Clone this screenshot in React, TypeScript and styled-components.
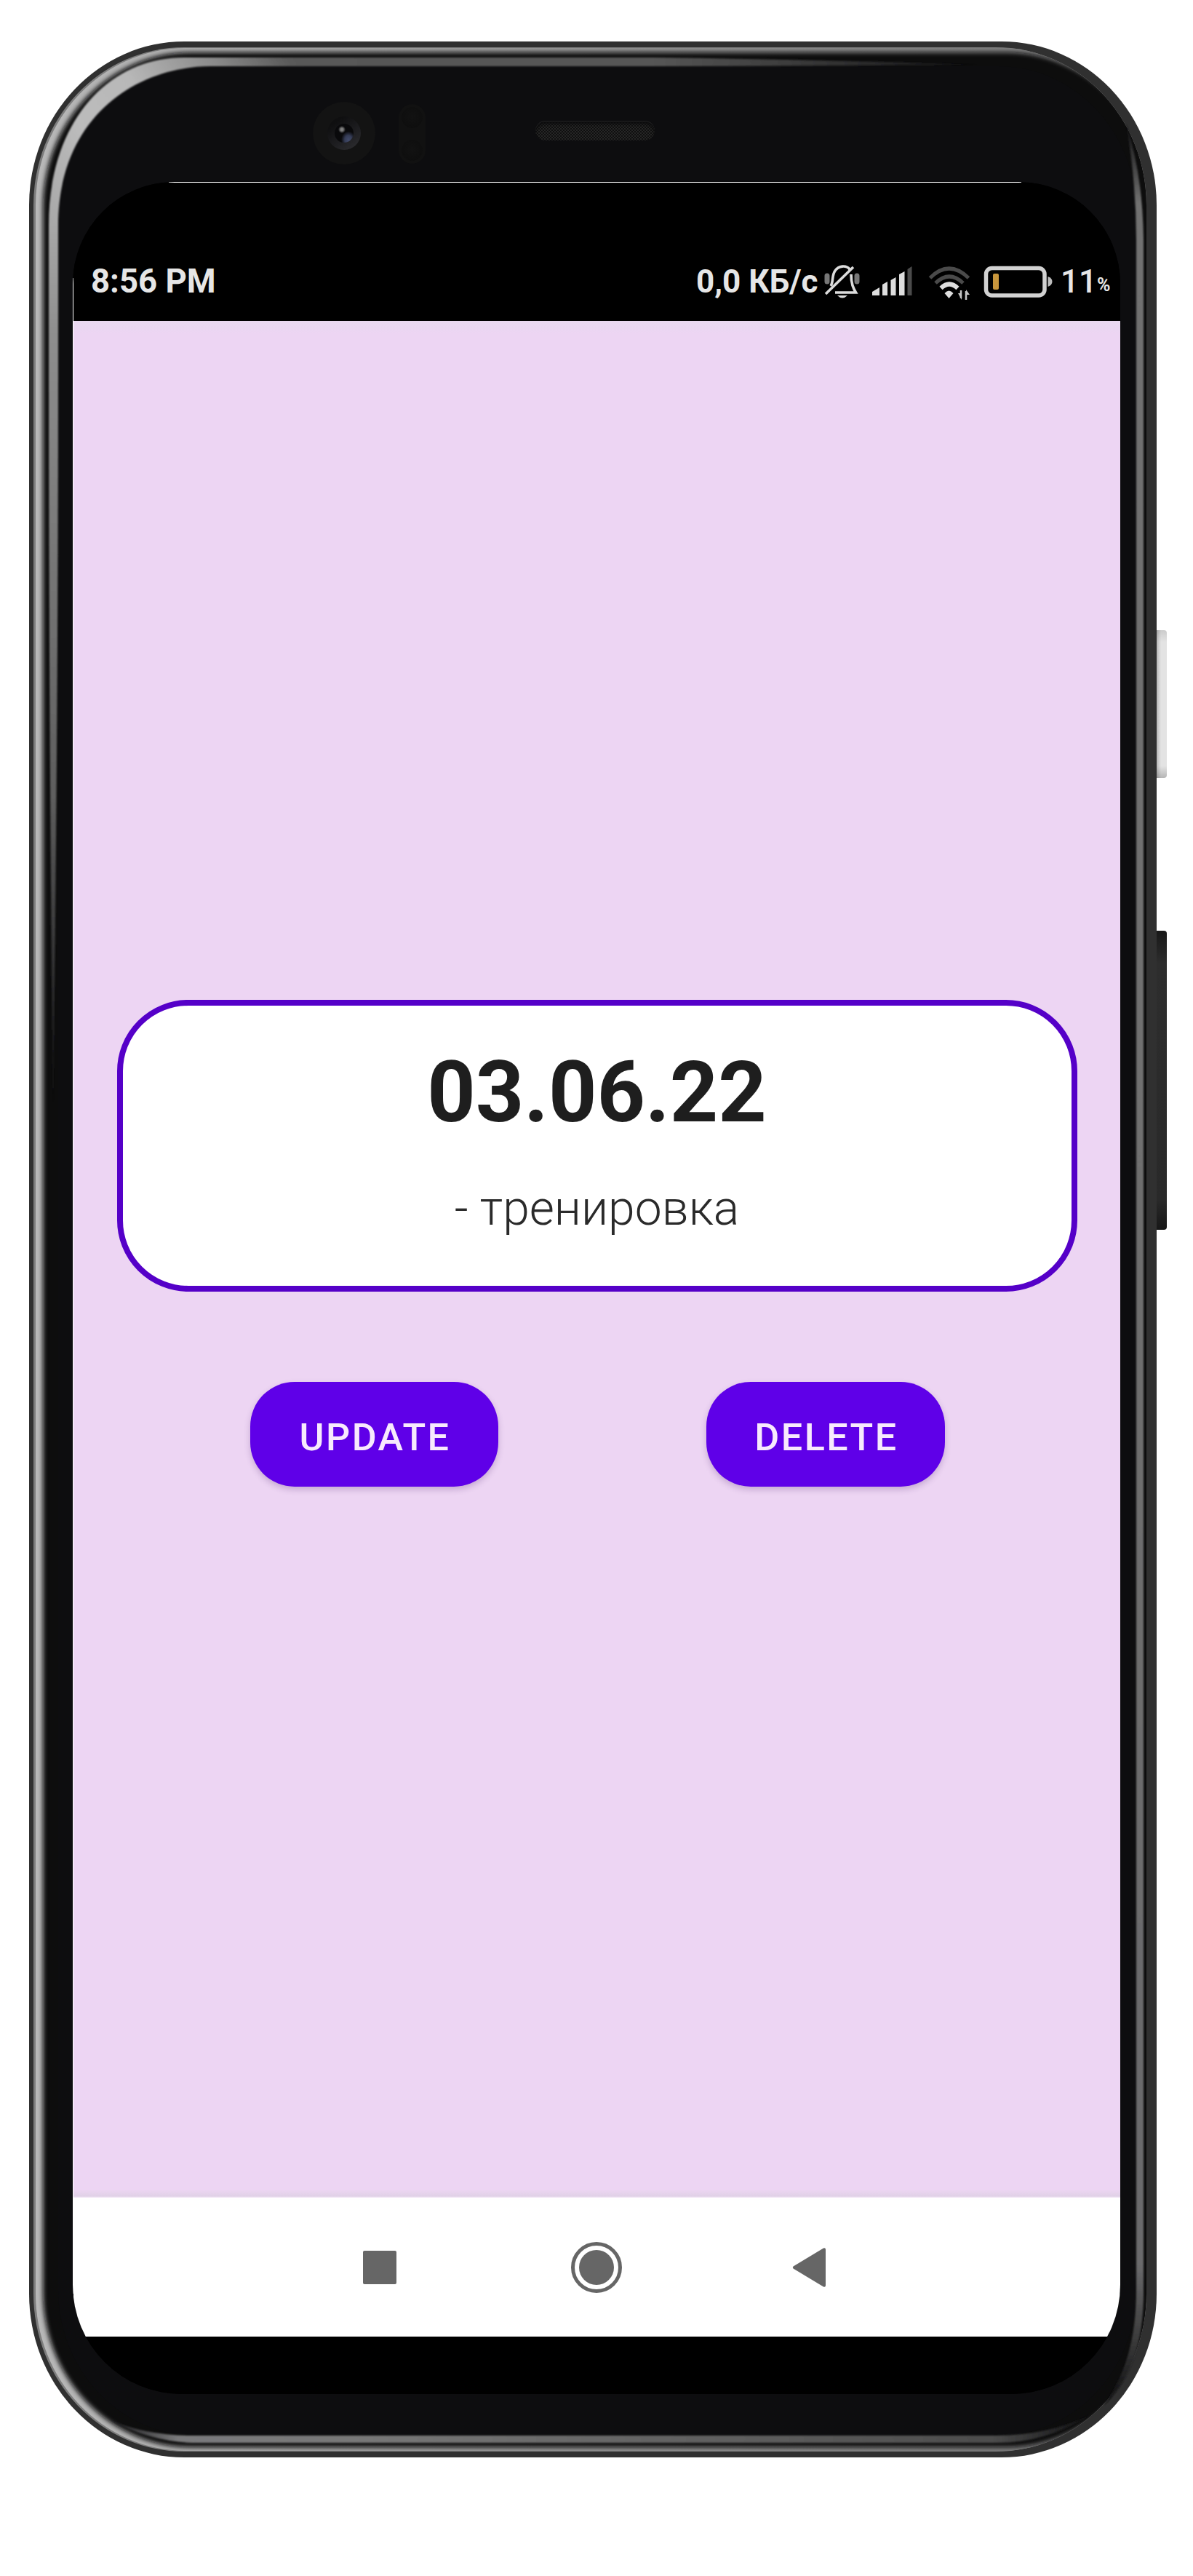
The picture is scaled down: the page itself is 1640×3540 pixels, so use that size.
import React from "react";
import styled, { createGlobalStyle } from "styled-components";

const GlobalStyle = createGlobalStyle`
  html, body { margin: 0; padding: 0; background: #ffffff; }
  * { box-sizing: border-box; }
`;

const Page = styled.main`
  width: 1640px;
  height: 3540px;
  padding: 57px 50px 163px 40px;
  background: #ffffff;
  font-family: Roboto, "Noto Sans", "Liberation Sans", sans-serif;
  overflow: hidden;
`;

const Phone = styled.div`
  position: relative;
  display: flex;
  flex-direction: column;
  width: 1550px;
  height: 3320px;
  padding-left: 60px;
  border-radius: 213px / 225px;
  background: #303030;
`;

const SideKey = styled.span<{ $top: number; $height: number; $light?: boolean }>`
  position: absolute;
  left: 1550px;
  top: ${(p) => p.$top}px;
  width: 14px;
  height: ${(p) => p.$height}px;
  border-radius: 0 4px 4px 0;
  background: ${(p) =>
    p.$light
      ? "linear-gradient(to bottom, rgba(0,0,0,.1), transparent 8%, transparent 92%, rgba(0,0,0,.2)), linear-gradient(to right, #b4b4b4, #d8d8d8 30%, #e3e3e3 45%)"
      : "linear-gradient(to bottom, #181818, #2d2d2d 11%, #292929 90%, #171717)"};
`;

const Glare = styled.svg`
  position: absolute;
  inset: 0;
  width: 1550px;
  height: 3320px;
`;

const TopBezel = styled.header`
  position: relative;
  display: flex;
  align-items: flex-start;
  height: 193px;
  padding: 83px 0 0 330px;
`;

const Camera = styled.div`
  display: grid;
  place-items: center;
  width: 86px;
  height: 86px;
  border-radius: 50%;
  background: #131313;
`;

const LensRing = styled.div`
  display: grid;
  place-items: center;
  width: 46px;
  height: 46px;
  border-radius: 50%;
  background: linear-gradient(145deg, #0f0f10 20%, #1e1e21 60%, #303033 100%);
`;

const Lens = styled.div`
  width: 26px;
  height: 26px;
  border-radius: 50%;
  background:
    radial-gradient(circle at 10px 8px, #858585 0, #777777 2px, transparent 5px),
    radial-gradient(ellipse at 19px 22px, #424b6b 0, #353c56 5px, transparent 10px),
    #09090b;
`;

const SensorPill = styled.div`
  display: flex;
  flex-direction: column;
  align-items: center;
  justify-content: space-between;
  width: 37px;
  height: 82px;
  margin: 3px 0 0 32px;
  padding: 4px 0;
  border-radius: 19px;
  background: #111111;
`;

const Sensor = styled.i`
  width: 29px;
  height: 29px;
  border-radius: 50%;
  background: radial-gradient(circle at 50% 45%, #121212, #0e0e0e 75%);
`;

const Speaker = styled.div`
  width: 164px;
  height: 27px;
  margin: 26px 0 0 151px;
  border-radius: 14px;
  box-shadow: inset 0 1px 0 #232324, inset 0 4px 4px #0b0b0c;
  background:
    repeating-conic-gradient(#0f0f0f 0 25%, #262626 0 50%) 0 0 / 4px 4px;
`;

const Screen = styled.section`
  position: relative;
  width: 1440px;
  height: 3040px;
  padding: 1px 0 0 1px;
  border-radius: 140px 140px 150px 150px;
  background:
    linear-gradient(#ffffff, #ffffff) 132px 0 / 1172px 1px no-repeat,
    linear-gradient(#ffffff, #ffffff) 0 132px / 1px 2770px no-repeat,
    #000000;
  overflow: hidden;
`;

const StatusBar = styled.div`
  display: flex;
  align-items: center;
  height: 190px;
  padding: 82px 0 0 24px;
  background: #000000;
  color: #e6e6e6;
`;

const StatusText = styled.span<{ $width: number; $size: number; $weight: number; $drop?: number }>`
  flex: none;
  width: ${(p) => p.$width}px;
  padding-top: ${(p) => p.$drop ?? 0}px;
  font-size: ${(p) => p.$size}px;
  font-weight: ${(p) => p.$weight};
  line-height: 54px;
  white-space: nowrap;
`;

const StatusIcon = styled.svg`
  flex: none;
  display: block;
  height: 54px;
`;

const AppView = styled.div`
  display: flex;
  flex-direction: column;
  align-items: center;
  height: 2579px;
  padding-top: 933px;
  background: linear-gradient(to bottom, #e9d9f0 0, #ead7f1 10px, #edd5f3 16px, #edd5f3 2568px, #e0d1e6 2577px, #f4e8f8 2579px);
`;

const DayCard = styled.article`
  display: flex;
  flex-direction: column;
  align-items: center;
  width: 1320px;
  height: 401px;
  padding-top: 49px;
  border: 8px solid #5500c8;
  border-radius: 98px;
  background: #ffffff;
`;

const DayTitle = styled.h1`
  margin: 0;
  font-size: 116px;
  line-height: 140px;
  font-weight: 700;
  color: #1e1e1e;
`;

const DayTask = styled.p`
  margin: 51px 0 0;
  font-size: 66px;
  line-height: 78px;
  font-weight: 300;
  color: #2a2a2a;
`;

const Actions = styled.div`
  display: flex;
  gap: 286px;
  margin: 124px 0 0 2px;
`;

const ActionButton = styled.button<{ $width: number }>`
  width: ${(p) => p.$width}px;
  height: 144px;
  padding: 8px 0 0 2px;
  border: 0;
  border-radius: 61px;
  background: #5f00e8;
  box-shadow: 0 4px 8px rgba(70, 30, 110, 0.24);
  color: #f8eafd;
  font-family: inherit;
  font-size: 52px;
  font-weight: 500;
  letter-spacing: 2.5px;
`;

const NavBar = styled.nav`
  display: flex;
  align-items: center;
  height: 191px;
  padding: 0 0 0 398px;
  background: #ffffff;
`;

const NavIcon = styled.svg<{ $gap: number }>`
  display: block;
  flex: none;
  width: 76px;
  height: 76px;
  margin-right: ${(p) => p.$gap}px;
  fill: #666666;
`;

const BottomGap = styled.div`
  height: 79px;
  background: #000000;
`;

const FrameGlare = () => (
  <Glare viewBox="40 57 1550 3320">
    <defs>
      <linearGradient id="rim" x1="0" y1="0" x2="1" y2="0">
        <stop offset="0" stopColor="#b8b8b8" />
        <stop offset=".25" stopColor="#a4a4a4" />
        <stop offset="1" stopColor="#777777" />
      </linearGradient>
      <linearGradient id="upper" gradientUnits="userSpaceOnUse" x1="73" y1="310" x2="520" y2="20">
        <stop offset="0" stopColor="#a8a8a8" />
        <stop offset=".2" stopColor="#bcbcbc" />
        <stop offset=".37" stopColor="#b8b8b8" />
        <stop offset=".58" stopColor="#8a8a8a" />
        <stop offset=".74" stopColor="#5a5a5a" />
        <stop offset="1" stopColor="#565656" />
      </linearGradient>
      <linearGradient id="upperFade" gradientUnits="userSpaceOnUse" x1="800" y1="0" x2="1346" y2="0">
        <stop offset="0" stopColor="#5a5a5a" />
        <stop offset=".19" stopColor="#555555" />
        <stop offset=".5" stopColor="#3e3e3e" />
        <stop offset="1" stopColor="#111113" />
      </linearGradient>
      <linearGradient id="leftFade" gradientUnits="userSpaceOnUse" x1="0" y1="309" x2="0" y2="1520">
        <stop offset="0" stopColor="#a8a8a8" />
        <stop offset=".12" stopColor="#8f8f8f" />
        <stop offset=".65" stopColor="#5e5e5e" />
        <stop offset="1" stopColor="#0d0d0f" />
      </linearGradient>
      <linearGradient id="lowerBand" gradientUnits="userSpaceOnUse" x1="150" y1="0" x2="1500" y2="0">
        <stop offset="0" stopColor="#151517" />
        <stop offset=".07" stopColor="#7a7a7c" />
        <stop offset=".25" stopColor="#787878" />
        <stop offset=".9" stopColor="#4d4d4d" />
        <stop offset="1" stopColor="#0d0d0f" />
      </linearGradient>
      <linearGradient id="rightBand" gradientUnits="userSpaceOnUse" x1="0" y1="170" x2="0" y2="3300">
        <stop offset="0" stopColor="#0d0d0f" />
        <stop offset=".035" stopColor="#717171" />
        <stop offset=".6" stopColor="#6e6e6e" />
        <stop offset=".94" stopColor="#6a6a6c" />
        <stop offset=".975" stopColor="#383838" />
        <stop offset="1" stopColor="#0d0d0f" />
      </linearGradient>
      <filter id="soft" x="-2%" y="-2%" width="104%" height="104%">
        <feGaussianBlur stdDeviation="3" />
      </filter>
      <filter id="edge" filterUnits="userSpaceOnUse" x="40" y="57" width="1550" height="3320">
        <feGaussianBlur stdDeviation=".8" />
      </filter>
      <clipPath id="body">
        <rect x="46" y="65" width="1530" height="3304" rx="207" ry="217" />
      </clipPath>
    </defs>
    <rect x="46" y="65" width="1530" height="3304" rx="207" ry="217" fill="#7d7d7d" />
    <g clipPath="url(#body)">
      <rect x="49" y="66" width="1538" height="3302" rx="206" ry="216" fill="url(#rim)" />
      <rect x="59" y="72" width="1528" height="3291" rx="203" ry="213" fill="#0b0b0d" filter="url(#soft)" />
    </g>
    <rect x="80" y="91" width="1482" height="3256" rx="190" ry="200" fill="#0d0d0f" />
    <g filter="url(#edge)">
      <path d="M253 79 H900 V91 H290 C188 91 80 160 80 310 H67 C67 165 150 79 253 79 Z" fill="url(#upper)" />
      <path d="M899 79 Q1130 82 1346 89 Q1120 91 899 91 Z" fill="url(#upperFade)" />
      <path d="M67 309 H80 V480 Q80 1000 73 1521 Q67 1000 67 480 Z" fill="url(#leftFade)" />
      <path d="M1548 170 Q1571 240 1572 330 V3150 C1572 3220 1555 3270 1518 3305 C1545 3265 1562 3220 1562 3145 V330 Q1562 250 1548 170 Z" fill="url(#rightBand)" />
      <path d="M150 3325 Q200 3347 265 3347 H1370 Q1440 3347 1500 3318 Q1440 3357 1370 3357 H265 Q205 3355 150 3325 Z" fill="url(#lowerBand)" />
    </g>
  </Glare>
);

const BellOff = () => (
  <StatusIcon width="66" viewBox="1131 358 66 54" fill="none" stroke="#dcdcdc" strokeWidth="3.6">
    <path d="M1142 391 C1146 385 1143 377 1148 370 C1153 363 1163 362 1168 368" />
    <path d="M1170 375 C1170 388 1173 394 1176.500 400 H1148" />
    <path d="M1135 402 L1173 365" />
    <path d="M1151 404 H1165 Q1158 411 1151 404Z" fill="#dcdcdc" stroke="none" />
    <path d="M1137 377 V385 M1178 377 V385" stroke="#777777" strokeWidth="7" strokeLinecap="round" />
  </StatusIcon>
);

const Signal = () => (
  <StatusIcon width="78" viewBox="1197 358 78 54" fill="#dedede">
    <path d="M1199 404 V399 L1209 393 V404Z" />
    <path d="M1213 404 V389 L1220 385 V404Z" />
    <path d="M1224.500 404 V383 L1231.500 379 V404Z" />
    <path d="M1236 404 V375 L1243.500 371 V404Z" />
    <path d="M1247.500 404 V368 L1253.500 364 V404Z" fill="#4b4b4b" />
  </StatusIcon>
);

const Wifi = () => (
  <StatusIcon width="76" viewBox="1275 358 76 54" fill="none" strokeWidth="5">
    <path d="M1278.500 380 Q1304.500 354 1331.500 380" stroke="#4a4a4a" />
    <path d="M1286 387 Q1305 369 1324 387" stroke="#4a4a4a" />
    <path d="M1293.500 394 Q1305 383 1316.500 394" stroke="#dedede" strokeWidth="6" />
    <path d="M1298.500 401 Q1304.500 394 1310.500 401 L1304.500 408Z" fill="#dedede" />
    <path d="M1321 397 V408 M1328 410 V398" stroke="#c4c4c4" strokeWidth="2.500" />
    <path d="M1317 401 L1322 410 V401Z M1328 396 L1333 403 H1328Z" fill="#c4c4c4" />
  </StatusIcon>
);

const Battery = () => (
  <StatusIcon width="107" viewBox="1351 358 107 54" fill="none">
    <rect x="1355.500" y="366.500" width="80.500" height="37.500" rx="8" stroke="#d2d2d2" strokeWidth="5.500" />
    <rect x="1365" y="374" width="8" height="22" rx="2" fill="#c8963c" />
    <path d="M1440.500 378 Q1446.500 380 1446.500 385 Q1446.500 390 1440.500 392Z" fill="#bdbdbd" />
  </StatusIcon>
);

export default function App() {
  return (
    <>
      <GlobalStyle />
      <Page>
        <Phone>
          <SideKey $top={809} $height={203} $light />
          <SideKey $top={1222} $height={411} />
          <FrameGlare />
          <TopBezel>
            <Camera>
              <LensRing>
                <Lens />
              </LensRing>
            </Camera>
            <SensorPill>
              <Sensor />
              <Sensor />
            </SensorPill>
            <Speaker />
          </TopBezel>
          <Screen>
            <StatusBar>
              <StatusText $width={832} $size={45.5} $weight={700}>8:56 PM</StatusText>
              <StatusText $width={174} $size={44} $weight={700}>0,0 КБ/с</StatusText>
              <BellOff />
              <Signal />
              <Wifi />
              <Battery />
              <StatusText $width={50} $size={44} $weight={500}>11</StatusText>
              <StatusText $width={24} $size={25} $weight={700} $drop={10}>%</StatusText>
            </StatusBar>
            <AppView>
              <DayCard>
                <DayTitle>03.06.22</DayTitle>
                <DayTask>- тренировка</DayTask>
              </DayCard>
              <Actions>
                <ActionButton $width={341}>UPDATE</ActionButton>
                <ActionButton $width={328}>DELETE</ActionButton>
              </Actions>
            </AppView>
            <NavBar>
              <NavIcon $gap={207} viewBox="0 0 76 76">
                <rect x="0" y="15" width="46" height="46" rx="2" />
              </NavIcon>
              <NavIcon $gap={207} viewBox="0 0 76 76">
                <circle cx="38" cy="38" r="32.500" fill="none" stroke="#666666" strokeWidth="5" />
                <circle cx="38" cy="38" r="24" />
              </NavIcon>
              <NavIcon $gap={0} viewBox="0 0 76 76">
                <path d="M25.500 36.500 L67 11.500 Q70 10.500 70 13.500 V62.500 Q70 65.500 67 64.500 L25.500 39.500 Q24 38 25.500 36.500Z" />
              </NavIcon>
            </NavBar>
            <BottomGap />
          </Screen>
        </Phone>
      </Page>
    </>
  );
}
